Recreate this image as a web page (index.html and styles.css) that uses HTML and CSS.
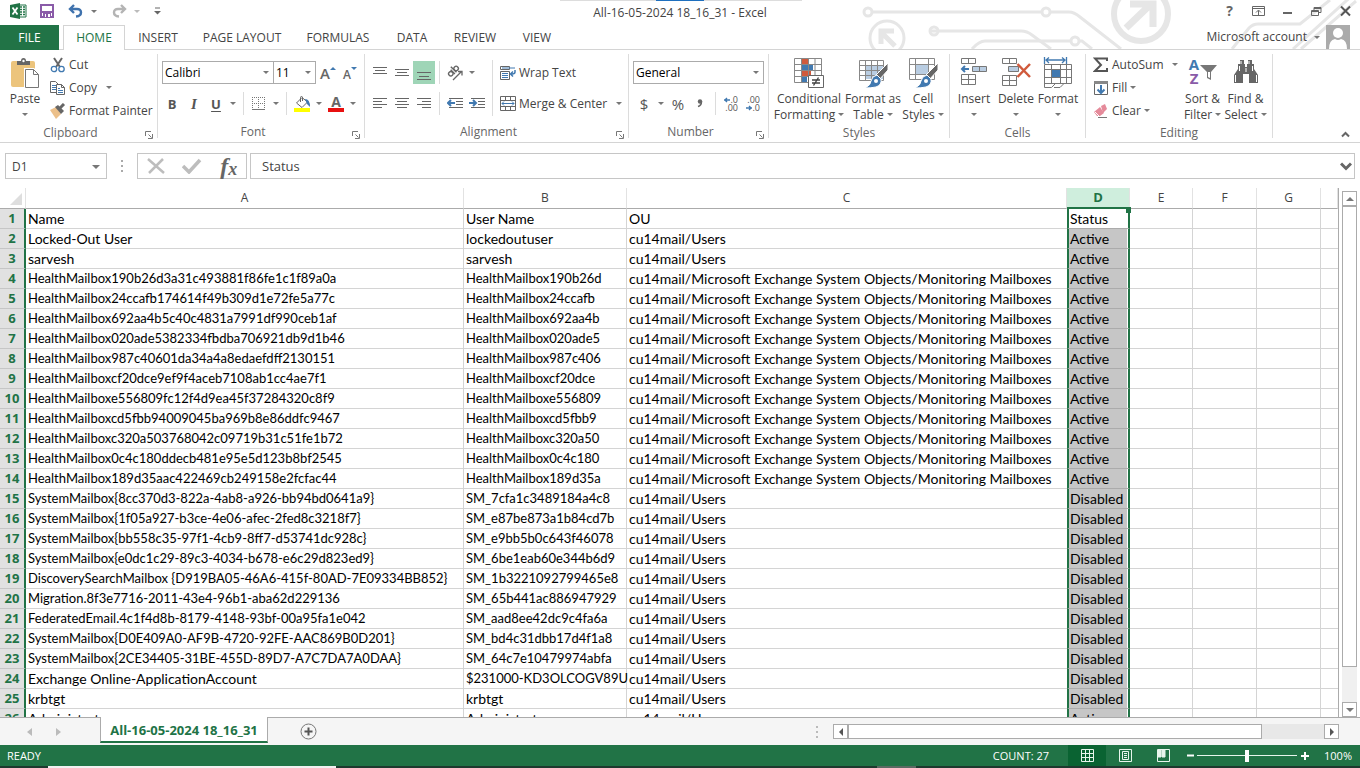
FILE: index.html
```html
<!DOCTYPE html>
<html lang="en">
<head>
<meta charset="utf-8">
<title>All-16-05-2024 18_16_31 - Excel</title>
<link rel="stylesheet" href="styles.css">
</head>
<body>
<div class="app">
<header class="head">
  <svg class="art" width="500" height="49" viewBox="0 0 500 49" fill="none" stroke="#e6e6e6" stroke-width="3">
    <circle cx="8" cy="12" r="4"/><path d="M12 12H182M190 12H209Q214 12 220 17L261 49M70 31H161Q167 31 172 35L191 49"/><circle cx="186" cy="12" r="4"/>
    <circle cx="74" cy="31" r="4"/><path d="M112 49Q119 41 125 41H211M219 41H222L232 49"/><circle cx="215" cy="41" r="4"/>
    <circle cx="27" cy="38" r="17"/><path d="M35 46L22 33M21 44V31H34" stroke-width="5"/>
    <circle cx="281" cy="14" r="27" stroke-width="6"/><path d="M266 28L291 4M270 4H293V27" stroke-width="7"/>
    <path d="M372 49L389 28Q393 24 398 24H440L470 0M433 49L496 -8M441 49L496 1" />
  </svg>
  <div class="titlebar">
    <div class="quick">
      <svg class="q-logo" width="17" height="16" viewBox="0 0 17 16"><path d="M9 2h7v12H9z" fill="#fff" stroke="#217346"/><path d="M10 4h2M13 4h2M10 6.500h2M13 6.500h2M10 9h2M13 9h2M10 11.500h2M13 11.500h2" stroke="#217346" stroke-width="1.500"/><path d="M0 2l10-2v16L0 14z" fill="#217346"/><path d="M2.500 4.500l5 7M7.500 4.500l-5 7" stroke="#fff" stroke-width="1.800"/></svg>
      <button class="q-btn" aria-label="Save"><svg width="14" height="14" viewBox="0 0 14 14"><path d="M1 1h12v12H1z" fill="#fff" stroke="#8a5ba8" stroke-width="2"/><path d="M1 7h12v2H1z" fill="#8a5ba8"/><path d="M3 8h8v6H3z" fill="#8a5ba8"/><path d="M5 10h5v3H5z" fill="#fff"/><path d="M6 10h2v3H6z" fill="#8a5ba8"/></svg></button>
      <button class="q-btn" aria-label="Undo"><svg width="16" height="14" viewBox="0 0 16 14" fill="none" stroke="#3f72ad" stroke-width="2.400"><path d="M2 5h7q4 0 4 3.500T8 12.500M6 1L2 5l4 4"/></svg><i class="ar"></i></button>
      <button class="q-btn faded" aria-label="Redo"><svg width="16" height="14" viewBox="0 0 16 14" fill="none" stroke="#b4b4b4" stroke-width="2.400"><path d="M14 5H7q-4 0-4 3.500T8 12.500M10 1l4 4-4 4"/></svg><i class="ar"></i></button>
      <button class="q-btn" aria-label="Customize"><svg width="7" height="8" viewBox="0 0 7 8"><path d="M1 1h5" stroke="#666"/><path d="M0 4h7L3.500 7.500z" fill="#666"/></svg></button>
    </div>
    <div class="doc-title">All-16-05-2024 18_16_31 - Excel</div>
    <div class="win">
      <button class="help" aria-label="Help">?</button>
      <button aria-label="Ribbon display options"><svg width="14" height="12" viewBox="0 0 14 12" fill="none" stroke="#666"><path d="M.5 1.500h12v9H.5zM.5 3.500h12M6.500 10V5.500M4 7.500l2.500-2.500L9 7.500"/></svg></button>
      <button aria-label="Minimize"><svg width="10" height="12" viewBox="0 0 10 12"><path d="M0 7h9v2H0z" fill="#666"/></svg></button>
      <button aria-label="Restore"><svg width="11" height="12" viewBox="0 0 11 12" fill="none" stroke="#666"><path d="M.5 5.500h7v5h-7zM3 5V2.500h7v5H8M.5 6.500h7M3 3.500h7"/></svg></button>
      <button aria-label="Close"><svg width="11" height="12" viewBox="0 0 11 12" stroke="#555" stroke-width="2"><path d="M1 1.500l9 9M10 1.500l-9 9"/></svg></button>
    </div>
    <div class="topline"></div>
  </div>
  <nav class="tabs">
    <button class="tab file">FILE</button><button class="tab home">HOME</button><button class="tab t-insert">INSERT</button><button class="tab t-page">PAGE LAYOUT</button><button class="tab t-form">FORMULAS</button><button class="tab t-data">DATA</button><button class="tab t-review">REVIEW</button><button class="tab t-view">VIEW</button>
    <button class="account">Microsoft account <i class="ar"></i></button>
    <svg class="avatar" width="24" height="24" viewBox="0 0 24 24"><path d="M0 0h24v24H0z" fill="#ababab"/><circle cx="12" cy="8" r="5" fill="#fff"/><path d="M3 24q0-9 6-10 3 2 6 0 6 1 6 10z" fill="#fff"/></svg>
  </nav>
</header>

<section class="ribbon">
  <div class="group g-clip">
    <div class="body">
      <button class="big paste"><svg width="30" height="32" viewBox="0 0 30 32"><rect x="1" y="4" width="24" height="26" rx="2" fill="#ecc47c"/><path d="M7 8V4h4q0-3 2.500-3T16 4h4v4z" fill="#666"/><circle cx="13.500" cy="4" r="1.200" fill="#fff"/><path d="M14 11h10l6 6v15H14z" fill="#fff"/><path d="M15.500 12.500h8l5 5v13h-13zM23.500 12.500v5h5" fill="#fff" stroke="#777"/></svg><span>Paste</span><i class="ar"></i></button>
      <div class="stack">
        <button class="row"><svg width="16" height="16" viewBox="0 0 16 16" fill="none"><path d="M4 1l6 9M12 1l-6 9" stroke="#666" stroke-width="2"/><circle cx="4" cy="12" r="2.700" stroke="#4179b0" stroke-width="1.300"/><circle cx="11.500" cy="12" r="2.700" stroke="#4179b0" stroke-width="1.300"/></svg>Cut</button>
        <button class="row"><svg width="16" height="16" viewBox="0 0 16 16" fill="#fff" stroke="#666"><path d="M.5 1.500h5l3 3v8h-8z"/><path d="M2 5.500h4M2 7.500h4M2 9.500h4" stroke="#4179b0"/><path d="M6.500 4.500h5l3 3v7h-8zM11.500 4.500v3h3"/><path d="M8 8.500h2M8 10.500h5M8 12.500h5" stroke="#4179b0"/></svg>Copy <i class="ar gap"></i></button>
        <button class="row"><svg width="16" height="16" viewBox="0 0 16 16"><path d="M0 7l6-3 5 7-5 5z" fill="#ecc08a"/><path d="M5 4l3-2 6 6-3 3z" fill="#666"/><path d="M10 5l4-4" stroke="#666" stroke-width="3"/></svg>Format Painter</button>
      </div>
    </div>
    <div class="label">Clipboard</div><svg class="launch" width="8" height="8"><use href="#launch"/></svg>
  </div>

  <div class="group g-font">
    <div class="body col">
      <div class="line">
        <span class="combo c-font"><select aria-label="Font"><option>Calibri</option></select><i class="ar"></i></span><span class="combo c-size"><select aria-label="Font size"><option>11</option></select><i class="ar"></i></span>
        <button class="grow" aria-label="Increase font size"><span class="big-a">A</span><svg width="6" height="16"><path d="M0 5l3-3 3 3z" fill="#4179b0"/></svg></button>
        <button class="grow" aria-label="Decrease font size"><span class="small-a">A</span><svg width="6" height="16"><path d="M0 2h6L3 5z" fill="#4179b0"/></svg></button>
      </div>
      <div class="line">
        <button class="ic b">B</button><button class="ic i">I</button><button class="ic u">U</button><button class="dd" aria-label="Underline styles"><i class="ar"></i></button><span class="sep"></span>
        <button class="ic" aria-label="Borders"><svg width="14" height="14" viewBox="0 0 14 14" fill="none" stroke="#777"><path d="M.5 0v13M6.500 0v13M12.500 0v13M0 .5h13M0 6.500h13" stroke-dasharray="1 1"/><path d="M0 12.500h13"/></svg></button><button class="dd" aria-label="Border styles"><i class="ar"></i></button><span class="sep s2"></span>
        <button class="ic" aria-label="Fill color"><svg width="17" height="16" viewBox="0 0 17 16"><path d="M8 1.500L2.500 7 8 11.500 13.500 6z" fill="#fff" stroke="#666"/><path d="M6.500 6V1.500q0-1 1-1t1 1V5" fill="none" stroke="#666"/><path d="M11 3q5 0 5 8l-3-3z" fill="#4179b0"/><path d="M0 12h16v4H0z" fill="#ff0"/></svg></button><button class="dd" aria-label="Fill colors"><i class="ar"></i></button>
        <button class="ic" aria-label="Font color"><span class="fc">A</span></button><button class="dd" aria-label="Font colors"><i class="ar"></i></button>
      </div>
    </div>
    <div class="label">Font</div><svg class="launch" width="8" height="8"><use href="#launch"/></svg>
  </div>

  <div class="group g-align">
    <div class="body">
      <div class="col">
        <div class="line">
          <button class="ic" aria-label="Top align"><svg width="14" height="16"><path d="M0 2.500h14M2 5.500h10M0 8.500h14" stroke="#666"/></svg></button>
          <button class="ic" aria-label="Middle align"><svg width="14" height="16"><path d="M0 4.500h14M2 7.500h10M0 10.500h14" stroke="#666"/></svg></button>
          <button class="ic on" aria-label="Bottom align"><svg width="14" height="16"><path d="M0 7.500h14M2 11.500h10M0 14.500h14" stroke="#666"/></svg></button>
          <span class="sep s3"></span>
          <button class="ic" aria-label="Orientation"><svg width="16" height="16" viewBox="0 0 16 16" fill="none" stroke="#666"><g transform="rotate(-45 7 7)" stroke-width="1.400"><circle cx="3.500" cy="6" r="2.200"/><path d="M6.300 3v6M8.500 1v8"/><circle cx="11" cy="6" r="2.200"/></g><path d="M6 15l8-8M11 6.500h4v4" stroke-width="1.300"/></svg></button><button class="dd" aria-label="Orientation options"><i class="ar"></i></button>
        </div>
        <div class="line">
          <button class="ic" aria-label="Align left"><svg width="14" height="14"><path d="M0 1.500h14M0 4.500h9M0 7.500h14M0 10.500h9" stroke="#666"/></svg></button>
          <button class="ic" aria-label="Center"><svg width="14" height="14"><path d="M0 1.500h14M2 4.500h10M0 7.500h14M2 10.500h10" stroke="#666"/></svg></button>
          <button class="ic" aria-label="Align right"><svg width="14" height="14"><path d="M0 1.500h14M5 4.500h9M0 7.500h14M5 10.500h9" stroke="#666"/></svg></button>
          <span class="sep s3"></span>
          <button class="ic" aria-label="Decrease indent"><svg width="16" height="14"><path d="M2 1.500h14M9 4.500h7M9 7.500h7M2 10.500h14" stroke="#666"/><path d="M1 6h7M4 3L1 6l3 3" stroke="#4179b0" stroke-width="2" fill="none"/></svg></button>
          <button class="ic" aria-label="Increase indent"><svg width="16" height="14"><path d="M2 1.500h14M9 4.500h7M9 7.500h7M2 10.500h14" stroke="#666"/><path d="M0 6h7M4 3l3 3-3 3" stroke="#4179b0" stroke-width="2" fill="none"/></svg></button>
        </div>
      </div>
      <span class="sep tall"></span>
      <div class="col wraps">
        <button class="line txt"><svg width="16" height="16" viewBox="0 0 16 16" fill="none" stroke="#666"><path d="M.5 1.500h9v3h-9z" /><path d="M2 3h13" stroke="#4179b0"/><path d="M.5 6.500h9v8h-9z"/><path d="M2 8.500h6M2 10.500h6M2 12.500h6" stroke="#4179b0"/><path d="M15 5v2q0 2-3 2h-1M13 6.500L10.500 9l2.500 2.500" stroke="#4179b0" stroke-width="1.500"/></svg>Wrap Text</button>
        <button class="line txt"><svg width="16" height="16" viewBox="0 0 16 16" fill="none" stroke="#666"><path d="M.5.500h15v14H.5zM.5 4.500h15M.5 10.500h15M5.500.500v4M10.500.500v4M5.500 10.500v4M10.500 10.500v4"/><path d="M2 7.500h12M4 5.500l-2 2 2 2M12 5.500l2 2-2 2" stroke="#4179b0"/></svg>Merge &amp; Center <i class="ar gap"></i></button>
      </div>
    </div>
    <div class="label">Alignment</div><svg class="launch" width="8" height="8"><use href="#launch"/></svg>
  </div>

  <div class="group g-num">
    <div class="body col">
      <div class="line"><span class="combo c-num"><select aria-label="Number format"><option>General</option></select><i class="ar"></i></span></div>
      <div class="line">
        <button class="ic sym">$</button><button class="dd" aria-label="Currency"><i class="ar"></i></button><button class="ic sym">%</button><button class="ic comma" aria-label="Comma style"><svg width="8" height="12" viewBox="0 0 8 12"><circle cx="4" cy="3.500" r="2.200" fill="#666"/><path d="M5.500 3.500q0 4-3.500 5" stroke="#666" stroke-width="1.500" fill="none"/></svg></button><span class="sep"></span>
        <button class="ic dec" aria-label="Increase decimal"><span><svg width="6" height="6" viewBox="0 0 6 6"><path d="M0 3h6M3 1L1 3l2 2" stroke="#4179b0" stroke-width="1.400" fill="none"/></svg>.0</span><span>.00</span></button><button class="ic dec" aria-label="Decrease decimal"><span>.00</span><span><svg width="6" height="6" viewBox="0 0 6 6"><path d="M0 3h6M3 1l2 2-2 2" stroke="#4179b0" stroke-width="1.400" fill="none"/></svg>.0</span></button>
      </div>
    </div>
    <div class="label">Number</div><svg class="launch" width="8" height="8"><use href="#launch"/></svg>
  </div>

  <div class="group g-styles">
    <div class="body">
      <button class="big w68"><svg width="32" height="32" viewBox="0 0 32 32" fill="none"><path d="M1.500 1.500h27v24h-27z" fill="#fff"/><path d="M9 2h6v5H9zM9 14h9v5H9z" fill="#d05a3c"/><path d="M9 8h11v5H9zM9 20h5v5H9z" fill="#4179b0"/><path d="M1.500 1.500h27v24h-27zM8.500 1v24M15.500 1v24M22 1v24M1 7.500h27M1 13.500h27M1 19.500h27" stroke="#888"/><path d="M15.500 18.500h15v12h-15z" fill="#fff" stroke="#666"/><path d="M19 23h8M19 26h8M25.500 20.500l-5 8" stroke="#444" stroke-width="1.400"/></svg><span>Conditional<br>Formatting<i class="ar in"></i></span></button>
      <button class="big w60"><svg width="32" height="32" viewBox="0 0 32 32" fill="none"><path d="M8 8h18v14H8z" fill="#b9cde2"/><path d="M2.500 3.500h24v20h-24zM8.500 3v20M14.500 3v20M20.500 3v20M2 8.500h24M2 13.500h24M2 18.500h24" stroke="#888"/><use href="#brush"/></svg><span>Format as<br>Table<i class="ar in"></i></span></button>
      <button class="big w40"><svg width="32" height="32" viewBox="0 0 32 32" fill="none"><path d="M9 8h12v10H9z" fill="#b9cde2"/><path d="M2.500 1.500h25v21h-25zM8.500 1v21M21.500 1v21M2 7.500h25M2 17.500h25" stroke="#888"/><use href="#brush"/></svg><span>Cell<br>Styles<i class="ar in"></i></span></button>
    </div>
    <div class="label">Styles</div>
  </div>

  <div class="group g-cells">
    <div class="body">
      <button class="big w42"><svg width="30" height="32" viewBox="0 0 30 32" fill="none" stroke="#777"><path d="M2.500 1.500h14v5h-14zM9.500 1.500v5M2.500 17.500h14v10h-14zM2.500 22.500h14M9.500 17.500v10"/><path d="M13.500 9.500h14v5h-14zM20.500 9.500v5" fill="#b9cde2"/><path d="M3 12h7M6 9l-3 3 3 3" stroke="#4179b0" stroke-width="2"/></svg><span>Insert</span><i class="ar"></i></button>
      <button class="big w42"><svg width="32" height="32" viewBox="0 0 32 32" fill="none" stroke="#777"><path d="M2.500 1.500h14v5h-14zM9.500 1.500v5M2.500 18.500h14v10h-14zM2.500 23.500h14M9.500 18.500v10"/><path d="M8.500 9.500h10v5h-10z" fill="#b9cde2"/><path d="M17.500 7L30 20M30 7L17.500 20" stroke="#d05a3c" stroke-width="2.500"/></svg><span>Delete</span><i class="ar"></i></button>
      <button class="big w42"><svg width="30" height="32" viewBox="0 0 30 32" fill="none" stroke="#777"><path d="M9 12h8v9H9z" fill="#4179b0" stroke="none"/><path d="M1.500 7.500h27v19h-27zM8.500 7v19M17.500 7v19M23.500 7v19M1 12.500h27M1 20.500h27M1.500 26v4.500h7l4-4M11 30.500h6l4-4"/><path d="M1.500 0v7M23.500 0v7M3 3h19M6 .5L3 3l3 3M19 .5L22 3l-3 3" stroke="#4179b0" stroke-width="1.300"/></svg><span>Format</span><i class="ar"></i></button>
    </div>
    <div class="label">Cells</div>
  </div>

  <div class="group g-edit">
    <div class="body">
      <div class="stack">
        <button class="row"><svg width="16" height="16" viewBox="0 0 16 16"><path d="M14 4V1.500H2L8 8l-6 6h12v-3" fill="none" stroke="#555" stroke-width="2"/></svg>AutoSum <i class="ar gap2"></i></button>
        <button class="row"><svg width="16" height="16" viewBox="0 0 16 16" fill="none"><path d="M1.500 1.500h13v13h-13z" stroke="#666"/><path d="M1 1h14v3H1z" fill="#888"/><path d="M8 5v8M4.500 9.500L8 13l3.500-3.500" stroke="#4179b0" stroke-width="2"/></svg>Fill<i class="ar"></i></button>
        <button class="row"><svg width="16" height="16" viewBox="0 0 16 16"><path d="M8 3l4-2 2 5-4 4z" fill="#e58a9a"/><path d="M7 4l4 6-4 3H4L1 9z" fill="#e58a9a"/><path d="M2 9l4 4" stroke="#fff"/><path d="M5 14.500h9" stroke="#777"/></svg>Clear<i class="ar"></i></button>
      </div>
      <button class="big w43"><span class="azf"><span class="az"><b>A</b><b class="z">Z</b></span><svg width="17" height="32" viewBox="0 0 17 32"><path d="M0 8h17l-6 7v8l-4-2v-6z" fill="#777"/><path d="M8 15h2v6l-2-1z" fill="#fff"/></svg></span><span>Sort &amp;<br>Filter<i class="ar in"></i></span></button>
      <button class="big w43"><svg width="28" height="32" viewBox="0 0 28 32"><path d="M8 3h4v4h1v3h2V7h1V3h4v4h2v5l4 6v8h-9v-9h-6v9H2v-8l4-6V7h2z" fill="#666"/><path d="M3.500 18v7M9 4v3M17 4v3M24.500 18v7M7.500 9v5M20.500 9v5M14 11v4" stroke="#fff"/></svg><span>Find &amp;<br>Select<i class="ar in"></i></span></button>
    </div>
    <div class="label">Editing</div>
  </div>
  <button class="collapse" aria-label="Collapse the ribbon"><svg width="9" height="7" viewBox="0 0 9 7" fill="none" stroke="#666" stroke-width="2"><path d="M1 5.500L4.500 2 8 5.500"/></svg></button>
</section>

<section class="formula">
  <div class="namebox"><input aria-label="Name box" value="D1"><i class="ar lg"></i></div>
  <svg class="dots" width="2" height="12"><path d="M0 1h2M0 6h2M0 11h2" stroke="#aaa" stroke-width="2"/></svg>
  <div class="fx">
    <button aria-label="Cancel"><svg width="18" height="16" viewBox="0 0 18 16" stroke="#bdbdbd" stroke-width="2.500"><path d="M1 1l16 14M16 1L2 15"/></svg></button>
    <button aria-label="Enter"><svg width="20" height="16" viewBox="0 0 20 16" fill="none" stroke="#bdbdbd" stroke-width="3.500"><path d="M1 8l6 6L18 2"/></svg></button>
    <button class="fxb" aria-label="Insert function">f<small>x</small></button>
  </div>
  <div class="fbox"><input aria-label="Formula" value="Status"><svg width="12" height="9" viewBox="0 0 12 9" fill="none" stroke="#666" stroke-width="3"><path d="M1 1.500l5 5 5-5"/></svg></div>
</section>

<main class="sheet">
  <div class="grid">
  <table>
    <colgroup><col class="k-n"><col class="k-a"><col class="k-b"><col class="k-c"><col class="k-d"><col class="k-e"><col class="k-f"><col class="k-f"><col></colgroup>
    <thead><tr><th class="corner"><svg width="12" height="12"><path d="M12 0v12H0z" fill="#dedede"/></svg></th><th>A</th><th>B</th><th>C</th><th class="sel">D</th><th>E</th><th>F</th><th>G</th><th></th></tr></thead>
    <tbody>
    <tr><th>1</th><td>Name</td><td>User Name</td><td>OU</td><td>Status</td><td></td><td></td><td></td><td></td></tr>
    <tr><th>2</th><td>Locked-Out User</td><td>lockedoutuser</td><td>cu14mail/Users</td><td>Active</td><td></td><td></td><td></td><td></td></tr>
    <tr><th>3</th><td>sarvesh</td><td>sarvesh</td><td>cu14mail/Users</td><td>Active</td><td></td><td></td><td></td><td></td></tr>
    <tr class="ids"><th>4</th><td>HealthMailbox190b26d3a31c493881f86fe1c1f89a0a</td><td>HealthMailbox190b26d</td><td>cu14mail/Microsoft Exchange System Objects/Monitoring Mailboxes</td><td>Active</td><td></td><td></td><td></td><td></td></tr>
    <tr class="ids"><th>5</th><td>HealthMailbox24ccafb174614f49b309d1e72fe5a77c</td><td>HealthMailbox24ccafb</td><td>cu14mail/Microsoft Exchange System Objects/Monitoring Mailboxes</td><td>Active</td><td></td><td></td><td></td><td></td></tr>
    <tr class="ids"><th>6</th><td>HealthMailbox692aa4b5c40c4831a7991df990ceb1af</td><td>HealthMailbox692aa4b</td><td>cu14mail/Microsoft Exchange System Objects/Monitoring Mailboxes</td><td>Active</td><td></td><td></td><td></td><td></td></tr>
    <tr class="ids"><th>7</th><td>HealthMailbox020ade5382334fbdba706921db9d1b46</td><td>HealthMailbox020ade5</td><td>cu14mail/Microsoft Exchange System Objects/Monitoring Mailboxes</td><td>Active</td><td></td><td></td><td></td><td></td></tr>
    <tr class="ids"><th>8</th><td>HealthMailbox987c40601da34a4a8edaefdff2130151</td><td>HealthMailbox987c406</td><td>cu14mail/Microsoft Exchange System Objects/Monitoring Mailboxes</td><td>Active</td><td></td><td></td><td></td><td></td></tr>
    <tr class="ids"><th>9</th><td>HealthMailboxcf20dce9ef9f4aceb7108ab1cc4ae7f1</td><td>HealthMailboxcf20dce</td><td>cu14mail/Microsoft Exchange System Objects/Monitoring Mailboxes</td><td>Active</td><td></td><td></td><td></td><td></td></tr>
    <tr class="ids"><th>10</th><td>HealthMailboxe556809fc12f4d9ea45f37284320c8f9</td><td>HealthMailboxe556809</td><td>cu14mail/Microsoft Exchange System Objects/Monitoring Mailboxes</td><td>Active</td><td></td><td></td><td></td><td></td></tr>
    <tr class="ids"><th>11</th><td>HealthMailboxcd5fbb94009045ba969b8e86ddfc9467</td><td>HealthMailboxcd5fbb9</td><td>cu14mail/Microsoft Exchange System Objects/Monitoring Mailboxes</td><td>Active</td><td></td><td></td><td></td><td></td></tr>
    <tr class="ids"><th>12</th><td>HealthMailboxc320a503768042c09719b31c51fe1b72</td><td>HealthMailboxc320a50</td><td>cu14mail/Microsoft Exchange System Objects/Monitoring Mailboxes</td><td>Active</td><td></td><td></td><td></td><td></td></tr>
    <tr class="ids"><th>13</th><td>HealthMailbox0c4c180ddecb481e95e5d123b8bf2545</td><td>HealthMailbox0c4c180</td><td>cu14mail/Microsoft Exchange System Objects/Monitoring Mailboxes</td><td>Active</td><td></td><td></td><td></td><td></td></tr>
    <tr class="ids"><th>14</th><td>HealthMailbox189d35aac422469cb249158e2fcfac44</td><td>HealthMailbox189d35a</td><td>cu14mail/Microsoft Exchange System Objects/Monitoring Mailboxes</td><td>Active</td><td></td><td></td><td></td><td></td></tr>
    <tr class="ids"><th>15</th><td>SystemMailbox{8cc370d3-822a-4ab8-a926-bb94bd0641a9}</td><td>SM_7cfa1c3489184a4c8</td><td>cu14mail/Users</td><td>Disabled</td><td></td><td></td><td></td><td></td></tr>
    <tr class="ids"><th>16</th><td>SystemMailbox{1f05a927-b3ce-4e06-afec-2fed8c3218f7}</td><td>SM_e87be873a1b84cd7b</td><td>cu14mail/Users</td><td>Disabled</td><td></td><td></td><td></td><td></td></tr>
    <tr class="ids"><th>17</th><td>SystemMailbox{bb558c35-97f1-4cb9-8ff7-d53741dc928c}</td><td>SM_e9bb5b0c643f46078</td><td>cu14mail/Users</td><td>Disabled</td><td></td><td></td><td></td><td></td></tr>
    <tr class="ids"><th>18</th><td>SystemMailbox{e0dc1c29-89c3-4034-b678-e6c29d823ed9}</td><td>SM_6be1eab60e344b6d9</td><td>cu14mail/Users</td><td>Disabled</td><td></td><td></td><td></td><td></td></tr>
    <tr class="ids"><th>19</th><td>DiscoverySearchMailbox {D919BA05-46A6-415f-80AD-7E09334BB852}</td><td>SM_1b3221092799465e8</td><td>cu14mail/Users</td><td>Disabled</td><td></td><td></td><td></td><td></td></tr>
    <tr class="ids"><th>20</th><td>Migration.8f3e7716-2011-43e4-96b1-aba62d229136</td><td>SM_65b441ac886947929</td><td>cu14mail/Users</td><td>Disabled</td><td></td><td></td><td></td><td></td></tr>
    <tr class="ids"><th>21</th><td>FederatedEmail.4c1f4d8b-8179-4148-93bf-00a95fa1e042</td><td>SM_aad8ee42dc9c4fa6a</td><td>cu14mail/Users</td><td>Disabled</td><td></td><td></td><td></td><td></td></tr>
    <tr class="ids"><th>22</th><td>SystemMailbox{D0E409A0-AF9B-4720-92FE-AAC869B0D201}</td><td>SM_bd4c31dbb17d4f1a8</td><td>cu14mail/Users</td><td>Disabled</td><td></td><td></td><td></td><td></td></tr>
    <tr class="ids"><th>23</th><td>SystemMailbox{2CE34405-31BE-455D-89D7-A7C7DA7A0DAA}</td><td>SM_64c7e10479974abfa</td><td>cu14mail/Users</td><td>Disabled</td><td></td><td></td><td></td><td></td></tr>
    <tr><th>24</th><td>Exchange Online-ApplicationAccount</td><td class="id">$231000-KD3OLCOGV89U</td><td>cu14mail/Users</td><td>Disabled</td><td></td><td></td><td></td><td></td></tr>
    <tr><th>25</th><td>krbtgt</td><td>krbtgt</td><td>cu14mail/Users</td><td>Disabled</td><td></td><td></td><td></td><td></td></tr>
    <tr><th>26</th><td>Administrator</td><td>Administrator</td><td>cu14mail/Users</td><td>Active</td><td></td><td></td><td></td><td></td></tr>
    </tbody>
  </table>
  </div>
  <div class="vscroll">
    <button class="sb" aria-label="Scroll up"><svg width="8" height="4"><path d="M0 4h8L4 0z" fill="#777"/></svg></button>
    <div class="vtrack"><div class="vthumb"></div></div>
    <button class="sb" aria-label="Scroll down"><svg width="8" height="4"><path d="M0 0h8L4 4z" fill="#777"/></svg></button>
  </div>
</main>

<section class="sheetbar">
  <div class="navs"><button aria-label="Previous sheet"><svg width="5" height="8"><path d="M5 0v8L0 4z" fill="#bbb"/></svg></button><button aria-label="Next sheet"><svg width="5" height="8"><path d="M0 0v8l5-4z" fill="#bbb"/></svg></button></div>
  <button class="sheettab">All-16-05-2024 18_16_31</button>
  <button class="add" aria-label="New sheet"><svg width="17" height="17" viewBox="0 0 17 17" fill="none" stroke="#777"><circle cx="8.500" cy="8.500" r="7.500"/><path d="M8.500 4.500v8M4.500 8.500h8" stroke="#555" stroke-width="2"/></svg></button>
  <svg class="dots" width="2" height="12"><path d="M0 1h2M0 6h2M0 11h2" stroke="#bbb" stroke-width="2"/></svg>
  <div class="hscroll">
    <button class="sb" aria-label="Scroll left"><svg width="4" height="8"><path d="M4 0v8L0 4z" fill="#555"/></svg></button>
    <div class="htrack"><div class="hthumb"></div></div>
    <button class="sb" aria-label="Scroll right"><svg width="4" height="8"><path d="M0 0v8l4-4z" fill="#555"/></svg></button>
  </div>
</section>

<footer class="status">
  <span class="ready">READY</span>
  <span class="count">COUNT: 27</span>
  <button class="view cur" aria-label="Normal"><svg width="13" height="13" fill="none" stroke="#e8f5ec"><path d="M.5.500h12v12H.5zM4.500 0v13M8.500 0v13M0 4.500h13M0 8.500h13"/></svg></button>
  <button class="view" aria-label="Page layout"><svg width="13" height="13" fill="none" stroke="#e8f5ec"><path d="M.5.500h12v12H.5zM3.500 2.500h6v8h-6zM5 4.500h3M5 6.500h3M5 8.500h3"/></svg></button>
  <button class="view" aria-label="Page break preview"><svg width="13" height="13" fill="none" stroke="#e8f5ec"><path d="M.5.500h12v12H.5z"/><path d="M1 1h3v7H1zM5 1h3v7H5z" fill="#e8f5ec"/></svg></button>
  <button class="zb" aria-label="Zoom out"><svg width="7" height="7"><path d="M0 3.500h7" stroke="#fff" stroke-width="2"/></svg></button>
  <input class="zoom" type="range" min="0" max="100" value="50" aria-label="Zoom">
  <button class="zb" aria-label="Zoom in"><svg width="8" height="8"><path d="M0 4h8M4 0v8" stroke="#fff" stroke-width="2"/></svg></button>
  <span class="pct">100%</span>
</footer>
<div class="strip"></div>
</div>
<svg width="0" height="0" class="defs">
  <symbol id="launch" viewBox="0 0 8 8" overflow="visible"><path d="M.5 5V.5H6M3.500 3.500l3 3M7.500 3v4.500H3" fill="none" stroke="#777"/></symbol>
  <symbol id="brush" viewBox="0 0 32 32"><path d="M31 6v7l-9 10-4-4z" fill="#666" stroke="#fff"/><path d="M20 18l4 4q1 6-5 8-5 1-11 1 6-3 6-7 1-5 6-6z" fill="#4179b0" stroke="#fff"/><circle cx="19" cy="24" r="2" fill="#fff"/></symbol>
</svg>
</body>
</html>
```
FILE: styles.css
```css
* { box-sizing: border-box; }
body { margin: 0; font: 12px/16px "Open Sans", "Noto Sans", sans-serif; color: #444; background: #fff; }
button, input, select { font: inherit; color: inherit; border: 0; padding: 0; margin: 0; background: none; border-radius: 0; outline: 0; }
button { display: flex; align-items: center; justify-content: center; white-space: nowrap; }
svg { display: block; flex: none; }
.defs { position: absolute; }
.app { display: flex; flex-direction: column; height: 100vh; overflow: hidden; }
.ar { display: block; flex: none; width: 0; height: 0; border: 3px solid transparent; border-top-color: #777; border-bottom: 0; }
.ar.in { display: inline-block; margin-left: 3px; vertical-align: 3px; }
.ar.lg { border-width: 4px 4px 0; }

.head { position: relative; border-bottom: 1px solid #d4d4d4; }
.art { position: absolute; right: 0; top: 0; z-index: -1; }
.titlebar { display: grid; grid-template-columns: 1fr auto 1fr; align-items: center; height: 25px; position: relative; }
.topline { position: absolute; top: 0; left: 50%; width: 242px; height: 1px; margin-left: -120px; background: linear-gradient(90deg, #ddd 96px, #1e6fbe 96px, #1e6fbe 144px, #ddd 144px); }
.quick { display: flex; align-items: center; gap: 13px; padding: 0 0 3px 10px; }
.q-btn { gap: 7px; }
.q-btn + .q-btn { margin-left: 1px; }
.faded .ar { opacity: .5; }
.doc-title { white-space: nowrap; }
.win { display: flex; justify-content: flex-end; align-items: center; gap: 4px; padding: 0 2px 3px 0; }
.win button { width: 25px; height: 20px; }
.win .help { font-size: 14px; font-weight: 700; color: #666; }
.tabs { display: flex; height: 25px; align-items: stretch; margin-bottom: -1px; }
.tab { height: 25px; }
.file { width: 59px; margin-right: 4px; background: #217346; color: #fff; }
.home { width: 62px; margin-right: 1px; color: #217346; border: 1px solid #d4d4d4; border-bottom: 0; background: #fff; }
.t-insert { width: 64px; } .t-page { width: 104px; } .t-form { width: 88px; } .t-data { width: 60px; } .t-review { width: 66px; } .t-view { width: 58px; }
.account { margin-left: auto; gap: 7px; margin-right: 6px; height: 24px; }
.avatar { margin-right: 10px; }

.ribbon { display: flex; flex: none; height: 93px; padding: 4px 0; border-bottom: 1px solid #d4d4d4; position: relative; }
.group { position: relative; border-right: 1px solid #dcdcdc; display: flex; flex-direction: column; flex: none; }
.body { display: flex; height: 70px; }
.col { display: flex; flex-direction: column; gap: 8px; padding-top: 7px; }
.label { line-height: 16px; height: 14px; margin-top: 1px; text-align: center; color: #666; padding-right: 16px; }
.g-styles .label, .g-cells .label, .g-edit .label { padding-right: 0; }
.launch { position: absolute; right: 4px; bottom: -1px; }
.g-clip { width: 158px; } .g-font { width: 207px; } .g-align { width: 264px; } .g-num { width: 140px; } .g-styles { width: 181px; } .g-cells { width: 136px; } .g-edit { width: 187px; }
.g-styles .body { padding-left: 6px; } .g-cells .body { padding-left: 3px; } .g-edit .body { padding-left: 7px; }
.big { flex-direction: column; justify-content: flex-start; padding-top: 3px; text-align: center; height: 70px; }
.big span { margin-top: 2px; }
.big > .ar { margin-top: 6px; }
.paste { width: 50px; }
.w68 { width: 68px; } .w60 { width: 60px; } .w40 { width: 40px; } .w42 { width: 42px; } .w43 { width: 43px; }
.stack { display: flex; flex-direction: column; margin-top: -1px; }
.row { height: 23px; justify-content: flex-start; gap: 3px; }
.g-edit .stack { width: 88px; }
.gap { margin-left: 6px; } .gap2 { margin-left: 5px; }
.line { display: flex; align-items: center; height: 23px; }
.txt { gap: 3px; justify-content: flex-start; }
.ic { width: 22px; height: 23px; color: #555; }
.on { background: #9fd5b7; }
.dd { width: 12px; height: 23px; }
.b, .i, .u { font-weight: 700; font-size: 13px; }
.i { font-style: italic; font-family: "Liberation Serif", serif; font-size: 15px; }
.u { text-decoration: underline; text-underline-offset: 2px; }
.sym { font-size: 15px; }
.sep { width: 1px; height: 23px; background: #dcdcdc; margin: 0 4px; }
.g-font .body { padding-left: 3px; }
.combo { position: relative; display: flex; align-items: center; height: 23px; border: 1px solid #ababab; }
.combo select { appearance: none; width: 100%; height: 21px; padding-left: 2px; color: #000; }
.combo .ar { position: absolute; right: 4px; }
.g-font .combo { margin-left: 1px; }
.c-font { width: 112px; }
.g-font .c-font + .c-size { margin-left: 0; border-left: 0; width: 42px; }
.c-num { width: 131px; }
.grow { width: 22px; height: 23px; color: #666; }
.g-font .c-size + .grow { margin-left: 1px; }
.big-a { font: 600 15px/20px "Open Sans", sans-serif; }
.small-a { font: 600 12px/16px "Open Sans", sans-serif; padding-top: 4px; }
.fc { width: 16px; height: 16px; font: 700 14px/12px "Open Sans", sans-serif; color: #666; border-bottom: 4px solid #e81010; }
.g-align .body { padding-left: 4px; }
.s3 { margin: 0 4px; }
.tall { height: 56px; margin: 6px 7px 0 4px; }
.g-num .body { padding-left: 4px; }
.g-num .sep { margin: 0 4px; }
.dec { flex-direction: column; font: 9px/8px "Open Sans", sans-serif; align-items: flex-end; padding-right: 4px; }
.dec span { display: flex; align-items: center; height: 8px; }
.azf { display: flex; height: 32px; }
.big .azf { margin: 0; }
.azf span { margin: 0; }
.az { display: flex; flex-direction: column; font-size: 15px; line-height: 14px; width: 12px; color: #4179b0; }
.az .z { color: #8a5ba8; }
.collapse { position: absolute; right: 10px; bottom: 4px; }

.formula { display: flex; align-items: center; flex: none; height: 26px; margin: 10px 5px 9px; }
.namebox { display: flex; align-items: center; width: 102px; height: 26px; border: 1px solid #c6c6c6; padding: 1px 6px 0; }
.namebox input { width: 100%; min-width: 0; }
.formula .dots { margin: 0 14px; }
.fx { display: flex; align-items: center; width: 110px; height: 26px; border: 1px solid #c6c6c6; justify-content: space-around; margin-right: 3px; }
.fxb { font: italic 700 24px/24px "Liberation Serif", serif; color: #666; }
.fxb small { font-size: 18px; margin-top: 5px; }
.fbox { flex: 1; display: flex; align-items: center; height: 26px; border: 1px solid #c6c6c6; padding: 0 2px 0 11px; }
.fbox input { flex: 1; min-width: 0; font-size: 13px; }

.sheet { flex: 1; min-height: 0; display: flex; }
.grid { flex: 1; min-width: 0; overflow: hidden; border-right: 1px solid #ababab; }
table { table-layout: fixed; width: 100%; border-collapse: separate; border-spacing: 0; }
.k-n { width: 26px; } .k-a { width: 438px; } .k-b { width: 163px; } .k-c { width: 440px; } .k-d { width: 63px; } .k-e { width: 63px; } .k-f { width: 64px; }
th { padding: 0; font-weight: 400; height: 20px; line-height: 19px; }
thead th { height: 21px; line-height: 20px; border-bottom: 1px solid #ababab; border-right: 1px solid #e2e2e2; }
.corner svg { margin: 2px 0 0 10px; }
thead .sel { position: relative; background: #cfeedd; color: #217346; font-weight: 700; font-size: 13px; line-height: 19px; border-bottom: 2px solid #217346; }
.sel::after { content: ""; position: absolute; right: -2px; bottom: -6px; width: 5px; height: 6px; background: #217346; }
tbody th { background: #e1e1e1; color: #217346; font-weight: 700; font-size: 13px; border-bottom: 1px solid #c6c6c6; border-right: 2px solid #217346; }
td { padding: 0 0 0 2px; height: 20px; font: 14px/19px Lato, "Open Sans", sans-serif; color: #000; white-space: nowrap; border-right: 1px solid #d4d4d4; border-bottom: 1px solid #d4d4d4; }
.ids td:nth-child(2), .ids td:nth-child(3), .id { font-size: 13px; }
td:nth-child(4) { border-right: 0; }
td:nth-child(5) { border-left: 2px solid #217346; border-right: 2px solid #217346; border-bottom-color: #ababab; background: #c6c6c6; padding-left: 1px; box-shadow: inset -1px 0 #fff; }
tbody tr:first-child td:nth-child(5) { background: #fff; }
td:last-child { border-right: 0; }
.vscroll { width: 21px; padding: 3px 3px 0 3px; display: flex; flex-direction: column; }
.sb { width: 15px; height: 15px; flex: none; border: 1px solid #ababab; background: #fff; }
.vtrack { flex: 1; background: #f0f0f0; }
.vthumb { height: 93%; border: 1px solid #ababab; background: #fff; }

.sheetbar { display: flex; flex: none; height: 28px; background: #f5f5f5; border-top: 1px solid #ababab; align-items: center; }
.navs { display: flex; width: 100px; gap: 24px; padding-left: 27px; }
.sheettab { align-self: flex-start; margin-top: -1px; width: 168px; height: 26px; padding-top: 1px; background: #fff; border: 1px solid #ababab; border-top: 0; border-bottom: 2px solid #217346; color: #217346; font-weight: 700; font-size: 13px; }
.add { margin-left: 32px; }
.sheetbar .dots { margin-left: auto; margin-right: 15px; }
.hscroll { display: flex; width: 39%; max-width: 506px; margin-right: 21px; }
.htrack { flex: 1; background: #e8e8e8; }
.hthumb { width: 87%; height: 15px; border: 1px solid #ababab; background: #fff; }

.status { display: flex; flex: none; height: 21px; background: #217346; color: #fff; align-items: center; font-size: 11px; }
.ready { margin-left: 7px; }
.count { margin-left: auto; margin-right: 19px; }
.view { width: 38px; height: 21px; }
.cur { background: #0a6332; }
.zb { width: 8px; }
.view + .zb { margin-left: 4px; }
.zoom { appearance: none; width: 100px; height: 12px; margin: 0 4px 0 3px; background: linear-gradient(#e8f5ec, #e8f5ec) center / 100% 1px no-repeat; }
.zoom::-webkit-slider-thumb { appearance: none; width: 4px; height: 12px; background: #fff; }
.pct { margin: 0 8px 0 15px; }
.strip { flex: none; height: 2px; background: linear-gradient(90deg, #1d3a2e 48px, #f0f0f0 48px, #f0f0f0 336px, #1d3a2e 336px, #1d3a2e 877px, #5a6b62 877px, #5a6b62 916px, #1d3a2e 916px); }
```
